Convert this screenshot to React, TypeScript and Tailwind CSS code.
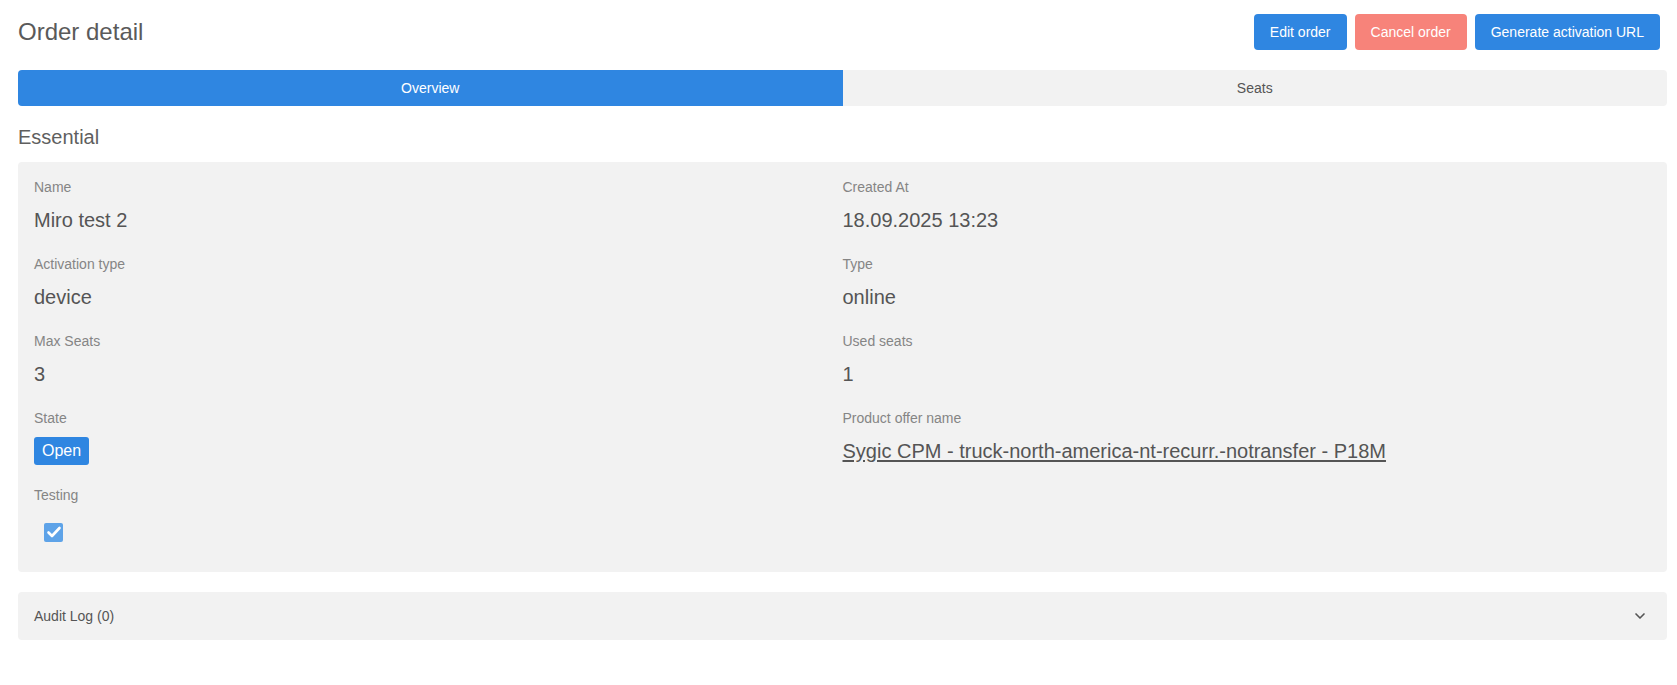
import { ChevronDown } from 'lucide-react'

const fields: { label: string; value: string; kind?: 'badge' | 'link' | 'check' }[] = [
  { label: 'Name', value: 'Miro test 2' },
  { label: 'Created At', value: '18.09.2025 13:23' },
  { label: 'Activation type', value: 'device' },
  { label: 'Type', value: 'online' },
  { label: 'Max Seats', value: '3' },
  { label: 'Used seats', value: '1' },
  { label: 'State', value: 'Open', kind: 'badge' },
  { label: 'Product offer name', value: 'Sygic CPM - truck-north-america-nt-recurr.-notransfer - P18M', kind: 'link' },
  { label: 'Testing', value: '', kind: 'check' },
]

function Field({ label, value, kind }: (typeof fields)[number]) {
  return (
    <div className="mb-[23px]">
      <div className="text-[14px] leading-[18px] text-[#858585] mb-3">{label}</div>
      <div className="h-6 flex items-center text-[20px] leading-6 text-[#555]">
        {kind === 'badge' && (
          <span className="h-7 px-2 flex items-center rounded-[3px] bg-[#2f86e1] text-white text-[16px]">{value}</span>
        )}
        {kind === 'link' && <a className="underline underline-offset-2 cursor-pointer">{value}</a>}
        {kind === 'check' && (
          <span className="ml-[10px] mt-2 w-[19px] h-[19px] rounded-[2px] bg-[#5ea3e8] flex items-center justify-center">
            <svg width="16" height="16" viewBox="0 0 16 16" fill="none" stroke="white" strokeWidth="2.6" strokeLinecap="round" strokeLinejoin="round">
              <path d="M2.5 8.5l3.5 3.5 7.5-8" />
            </svg>
          </span>
        )}
        {!kind && value}
      </div>
    </div>
  )
}

export default function App() {
  return (
    <div className="min-h-screen bg-white pl-[18px] pr-[10px] pt-[14px] font-['Liberation_Sans',Arial,sans-serif] text-[#555]">
      <div className="flex items-center justify-between pr-[7px]">
        <h1 className="text-[24px] leading-9 text-[#5a5a5a]">Order detail</h1>
        <div className="flex gap-2">
          <button className="h-9 px-4 rounded bg-[#2f86e1] text-white text-[14px]">Edit order</button>
          <button className="h-9 px-4 rounded bg-[#f7837a] text-white text-[14px]">Cancel order</button>
          <button className="h-9 px-4 rounded bg-[#2f86e1] text-white text-[14px]">Generate activation URL</button>
        </div>
      </div>

      <div className="mt-5 flex h-9 rounded overflow-hidden text-[14px]">
        <div className="flex-1 flex items-center justify-center bg-[#2f86e1] text-white">Overview</div>
        <div className="flex-1 flex items-center justify-center bg-[#f2f2f2] text-[#555]">Seats</div>
      </div>

      <h2 className="mt-[17px] text-[20px] leading-7 text-[#5f5f5f]">Essential</h2>

      <div className="mt-[11px] rounded bg-[#f2f2f2] px-4 pt-4 pb-[9px] grid grid-cols-2">
        {fields.map((f) => (
          <Field key={f.label} {...f} />
        ))}
      </div>

      <div className="mt-5 h-12 rounded bg-[#f2f2f2] pl-4 pr-[19px] flex items-center justify-between">
        <span className="text-[14px] text-[#555]">Audit Log (0)</span>
        <ChevronDown size={16} strokeWidth={2.5} className="text-[#555]" />
      </div>
    </div>
  )
}
